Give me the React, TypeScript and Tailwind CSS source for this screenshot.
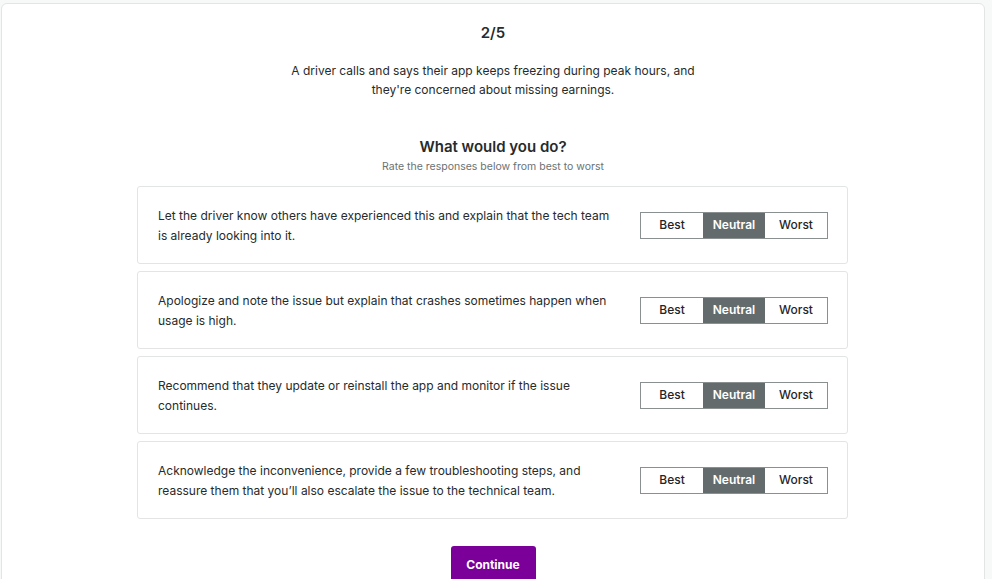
import { useState } from "react";

type Rating = "Best" | "Neutral" | "Worst";

const responses = [
  "Let the driver know others have experienced this and explain that the tech team is already looking into it.",
  "Apologize and note the issue but explain that crashes sometimes happen when usage is high.",
  "Recommend that they update or reinstall the app and monitor if the issue continues.",
  "Acknowledge the inconvenience, provide a few troubleshooting steps, and reassure them that you\u2019ll also escalate the issue to the technical team.",
];

const options: Rating[] = ["Best", "Neutral", "Worst"];

function RatingToggle({ value, onChange }: { value: Rating; onChange: (v: Rating) => void }) {
  return (
    <div className="flex h-[27px] shrink-0 border border-[#8a8f90]">
      {options.map((opt) => (
        <button
          key={opt}
          onClick={() => onChange(opt)}
          className={
            opt === value
              ? "w-[62px] bg-[#646b6c] text-[12px] font-semibold text-white"
              : "w-[62px] bg-white text-[12px] font-medium text-[#1f2526]"
          }
        >
          {opt}
        </button>
      ))}
    </div>
  );
}

export default function App() {
  const [ratings, setRatings] = useState<Rating[]>(responses.map(() => "Neutral"));

  return (
    <div
      className="h-[579px] overflow-hidden bg-[#f7f8f8] pl-[1px] pt-[3px]"
      style={{ fontFamily: "Inter, 'Noto Sans', sans-serif" }}
    >
      <div className="h-[640px] w-[984px] rounded-md border border-[#e3e5e5] bg-white text-[#262b2c]">
        <div className="flex flex-col items-center">
          <h2 className="mt-[19px] text-[15px] font-semibold leading-[20px]">2/5</h2>

          <p className="mt-[18px] max-w-[420px] text-center text-[12px] leading-[19px]">
            A driver calls and says their app keeps freezing during peak hours, and they're concerned about missing earnings.
          </p>

          <h3 className="mt-[37px] text-[15px] font-semibold leading-[22px]">What would you do?</h3>
          <p className="mt-[2px] text-[10.5px] leading-[14px] text-[#6b7274]">Rate the responses below from best to worst</p>

          <div className="mr-[1px] mt-[12px] flex w-[711px] flex-col gap-[7px]">
            {responses.map((text, i) => (
              <div
                key={i}
                className="flex h-[78px] items-center gap-6 rounded-[3px] border border-[#e3e5e5] pl-5 pr-[19px]"
              >
                <p className="flex-1 pt-[1px] text-[12px] leading-[20px]">{text}</p>
                <RatingToggle
                  value={ratings[i]}
                  onChange={(v) => setRatings((r) => r.map((x, j) => (j === i ? v : x)))}
                />
              </div>
            ))}
          </div>

          <button className="mt-[27px] h-[38px] w-[85px] rounded-[3px] bg-[#7a0099] text-[12px] font-bold text-white">
            Continue
          </button>
        </div>
      </div>
    </div>
  );
}
